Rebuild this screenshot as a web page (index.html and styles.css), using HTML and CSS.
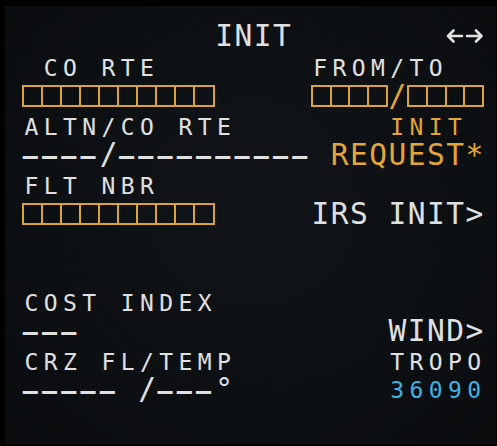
FILE: index.html
```html
<!DOCTYPE html>
<html lang="en">
<head>
  <meta charset="UTF-8" />
  <meta name="viewport" content="width=device-width, initial-scale=1.0" />
  <title>MCDU INIT</title>
  <link rel="stylesheet" href="styles.css">
</head>
<body>
  <div class="screen">
    <div class="title-row">
      <span></span>
      <span class="lg white">INIT</span>
      <svg class="arrows" width="38" height="16" viewBox="0 0 38 16">
        <path d="M2 8 H16 M7.5 2.5 L2 8 L7.5 13.5" />
        <path d="M21 8 H35.5 M30 2.5 L35.5 8 L30 13.5" />
      </svg>
    </div>

    <div class="pair">
      <div class="label-row">
        <span class="sm white"> CO RTE</span>
        <span class="sm white">FROM/TO  </span>
      </div>
      <div class="data-row">
        <div class="boxes b10">
          <i></i><i></i><i></i><i></i><i></i><i></i><i></i><i></i><i></i><i></i>
        </div>
        <div class="fromto">
          <div class="boxes b4"><i></i><i></i><i></i><i></i></div>
          <span class="lg amber slash">/</span>
          <div class="boxes b4"><i></i><i></i><i></i><i></i></div>
        </div>
      </div>
    </div>

    <div class="pair">
      <div class="label-row">
        <span class="sm white">ALTN/CO RTE</span>
        <span class="sm amber">INIT </span>
      </div>
      <div class="data-row">
        <span class="lg white"><span class="dash">––––</span>/<span class="dash">––––––––––</span></span>
        <span class="lg amber">REQUEST*</span>
      </div>
    </div>

    <div class="pair">
      <div class="label-row">
        <span class="sm white">FLT NBR</span>
      </div>
      <div class="data-row">
        <div class="boxes b10">
          <i></i><i></i><i></i><i></i><i></i><i></i><i></i><i></i><i></i><i></i>
        </div>
        <span class="lg white">IRS INIT&gt;</span>
      </div>
    </div>

    <div class="pair">
      <div class="label-row"></div>
      <div class="data-row"></div>
    </div>

    <div class="pair">
      <div class="label-row">
        <span class="sm white">COST INDEX</span>
      </div>
      <div class="data-row">
        <span class="lg white"><span class="dash">–––</span></span>
        <span class="lg white">WIND&gt;</span>
      </div>
    </div>

    <div class="pair">
      <div class="label-row">
        <span class="sm white">CRZ FL/TEMP</span>
        <span class="sm white">TROPO</span>
      </div>
      <div class="data-row">
        <span class="lg white"><span class="dash">–––––</span> /<span class="dash">–––</span>°</span>
        <span class="sm cyan">36090</span>
      </div>
    </div>
  </div>
</body>
</html>
```

FILE: styles.css
```css
body {
  margin: 0;
  background: #000;
  font-family: 'DejaVu Sans Mono', monospace;
}
.screen {
  margin: 6px 1px 0 5px;
  height: 438px;
  padding: 15px 12px 0 17px;
  box-sizing: border-box;
  background: radial-gradient(ellipse at 50% 45%, #111418 0%, #0d1013 60%, #0a0c0e 100%);
}
.title-row {
  display: grid;
  grid-template-columns: 1fr auto 1fr;
  align-items: center;
  height: 30px;
  line-height: 30px;
  margin-bottom: 4px;
}
.arrows {
  justify-self: end;
  fill: none;
  stroke: #e2e2e2;
  stroke-width: 2.6;
  stroke-linecap: round;
  stroke-linejoin: round;
}
.pair {
  height: 58.8px;
}
.label-row {
  display: flex;
  justify-content: space-between;
  align-items: center;
  height: 27px;
  line-height: 27px;
}
.data-row {
  display: flex;
  justify-content: space-between;
  align-items: center;
  height: 31.8px;
  line-height: 28px;
  padding-bottom: 3.8px;
  box-sizing: border-box;
}
.lg,
.sm {
  white-space: pre;
}
.lg {
  font-size: 29.5px;
  letter-spacing: 1.49px;
  margin: 0 -0.7px 0 0.7px;
}
.sm {
  font-size: 23px;
  letter-spacing: 5.4px;
  margin: 0 -2.6px 0 2.6px;
}
.dash {
  font-size: 25px;
  font-weight: bold;
  letter-spacing: 4.2px;
}
.white {
  color: #e0e0e0;
}
.amber {
  color: #e3a637;
}
.cyan {
  color: #3db3e4;
}
.boxes {
  display: flex;
  height: 22px;
  border: 2.5px solid #dca437;
  box-sizing: border-box;
}
.boxes i {
  flex: 1;
  border-left: 2.5px solid #dca437;
}
.boxes i:first-child {
  border-left: none;
}
.b10 {
  width: 192.5px;
}
.b4 {
  width: 77px;
}
.fromto {
  display: flex;
  align-items: center;
}
.slash {
  margin: 0;
  width: 19.25px;
  letter-spacing: 0;
  text-align: center;
}
```
